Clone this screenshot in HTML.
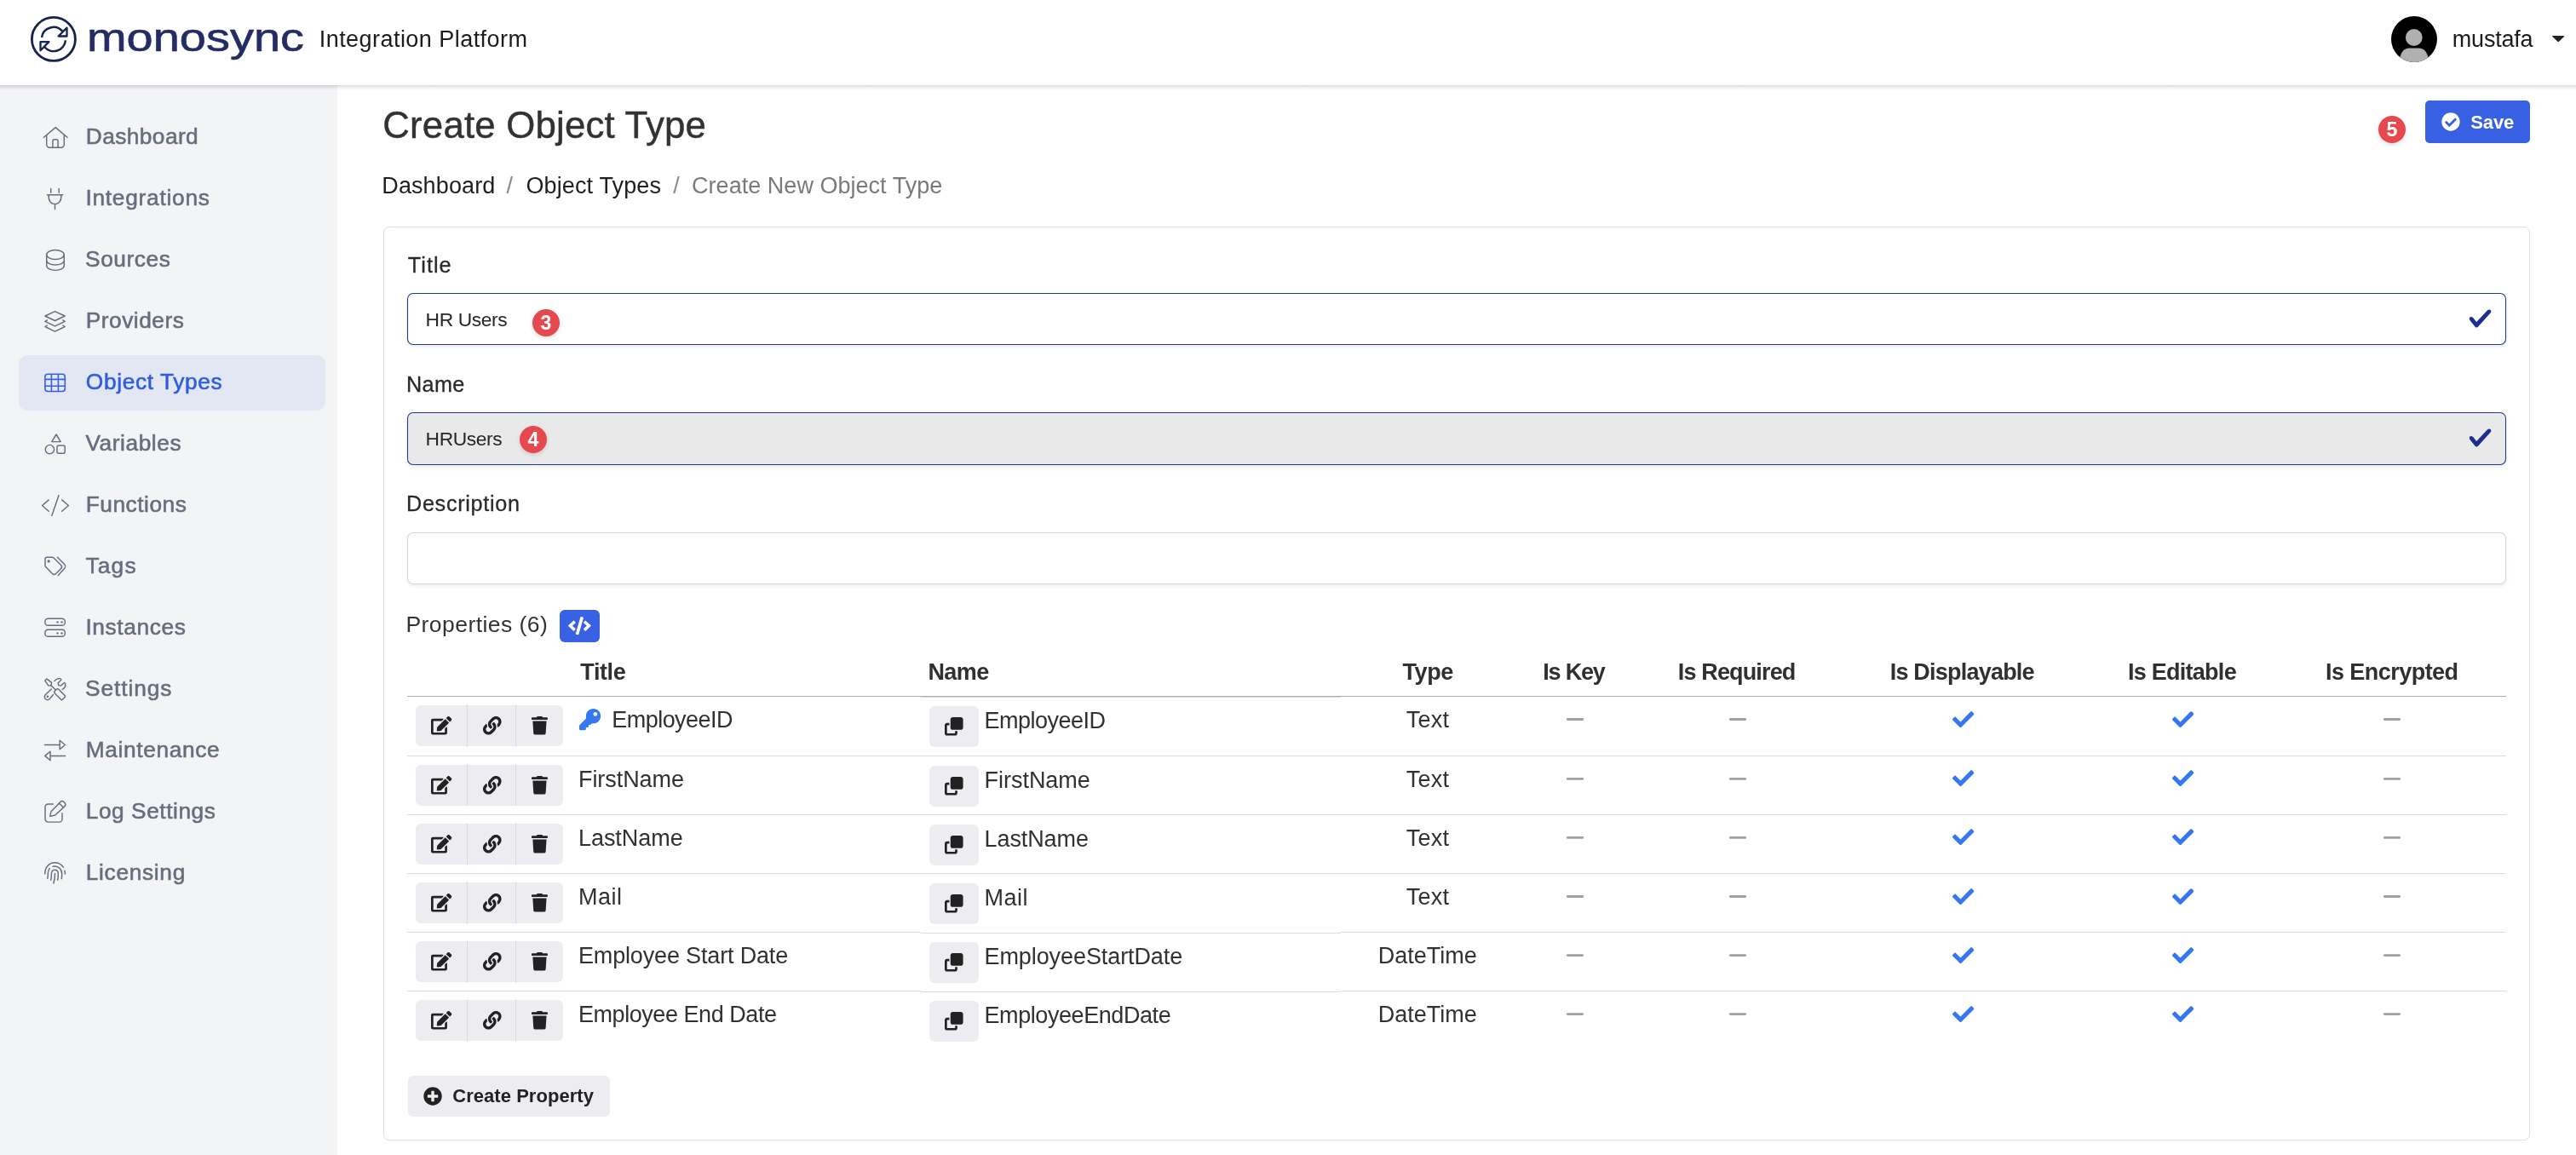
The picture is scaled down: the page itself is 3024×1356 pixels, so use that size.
<!DOCTYPE html>
<html lang="en"><head><meta charset="utf-8"><title>Create Object Type - monosync</title>
<style>
*{box-sizing:border-box;margin:0;padding:0}
html,body{width:3024px;height:1356px;overflow:hidden;background:#fff}
body{position:relative;font-family:"Liberation Sans",Arial,sans-serif;-webkit-font-smoothing:antialiased}
.t{position:absolute;white-space:nowrap;line-height:1;display:block}
.abs{position:absolute;display:block}
#hdr{left:0;top:0;width:3024px;height:100px;background:#fff}
#hshadow{left:0;top:100px;width:3024px;height:6px;background:linear-gradient(to bottom,rgba(20,25,40,.15),rgba(20,25,40,.05) 55%,rgba(20,25,40,0));z-index:5}
#side{left:0;top:100px;width:396px;height:1256px;background:#f3f4f6}
#active{left:22px;top:417px;width:360px;height:65px;border-radius:10px;background:#e3e7f4}
#card{left:450px;top:266px;width:2520px;height:1073px;border:1px solid #dedede;border-radius:7px;background:#fff}
.badge{will-change:transform;width:32px;height:32px;border-radius:50%;background:#e5484d;box-shadow:0 2px 5px rgba(0,0,0,.13);color:#fff;font-weight:700;font-size:23.2px;line-height:32px;text-align:center}
.btn{background:#ededf1;border-radius:6px}
svg{position:absolute;display:block;overflow:visible}
#tx{position:absolute;left:0;top:0;width:3024px;height:1356px;will-change:transform}
@media (max-width:2000px){html{zoom:.5}}

</style></head><body>
<div class="abs" id="hdr"></div>
<div class="abs" id="side"></div>
<div class="abs" id="hshadow"></div>
<div class="abs" id="active"></div>
<div class="abs" id="card"></div>
<svg style="left:0;top:0" width="400" height="100" viewBox="0 0 400 100">
<circle cx="62.9" cy="45.95" r="25.5" fill="none" stroke="#15244d" stroke-width="2.8"/>
<g fill="none" stroke="#15244d" stroke-width="2.5" stroke-linejoin="miter">
<path d="M49.0 44.0 A14 14 0 0 1 73.6 36.9"/>
<path d="M76.9 47.4 A14 14 0 0 1 52.2 55.0"/>
<path d="M78.5 32.6 L78.5 42.5 L68.6 42.5 Z" stroke-width="2.3" stroke-linejoin="round"/>
<path d="M47.5 49.1 L57.4 49.1 L47.5 59.2 Z" stroke-width="2.3" stroke-linejoin="round"/>
</g>
<text x="102.0" y="60.4" font-family="Liberation Sans, Arial, sans-serif" font-size="47" fill="#232c63" stroke="#232c63" stroke-width="0.6" textLength="255" lengthAdjust="spacingAndGlyphs">monosync</text>
</svg>
<svg style="left:2807px;top:19px" width="54" height="54" viewBox="0 0 54 54"><defs><clipPath id="av"><circle cx="27" cy="27" r="27"/></clipPath></defs>
<circle cx="27" cy="27" r="27" fill="#000"/><g clip-path="url(#av)" fill="#b0b0b0"><circle cx="26.8" cy="25" r="9.9"/><path d="M9.7 56 C9.7 45 13.5 37.5 21.5 37.5 L32.3 37.5 C40.3 37.5 44.1 45 44.1 56 L44.1 60 L9.7 60 Z"/></g></svg>
<svg style="left:2996px;top:42px" width="14.4" height="7.4" viewBox="0 0 14.4 7.4"><path d="M0.6 0 L13.8 0 Q14.6 0.2 14 0.9 L7.7 7.1 Q7.2 7.5 6.7 7.1 L0.4 0.9 Q-0.2 0.2 0.6 0 Z" fill="#222"/></svg>
<div class="abs" style="left:2847px;top:118px;width:123px;height:50px;border-radius:5px;background:#3860e2"></div>
<svg style="left:2866.00px;top:131.90px" width="22.00" height="22.00" viewBox="0 0 512 512" ><path fill="#fff" d="M504 256c0 136.967-111.033 248-248 248S8 392.967 8 256 119.033 8 256 8s248 111.033 248 248zM227.314 387.314l184-184c6.248-6.248 6.248-16.379 0-22.627l-22.627-22.627c-6.248-6.249-16.379-6.249-22.628 0L216 308.118l-70.059-70.059c-6.248-6.248-16.379-6.248-22.628 0l-22.627 22.627c-6.248 6.248-6.248 16.379 0 22.627l104 104c6.249 6.249 16.379 6.249 22.628.001z"/></svg>
<div class="abs badge" style="left:2792px;top:136.4px">5</div>
<svg style="left:0;top:0" width="3024" height="1356" viewBox="0 0 3024 1356">
<defs><filter id="ish" x="-1%" y="-20%" width="102%" height="150%"><feDropShadow dx="0" dy="2" stdDeviation="2" flood-color="#000" flood-opacity=".07"/></filter></defs>
<rect x="478.5" y="344.5" width="2463" height="60" rx="6.5" fill="#fff" stroke="#263a88" stroke-width="1.05" filter="url(#ish)"/>
<rect x="478.5" y="484.5" width="2463" height="61" rx="6.5" fill="#e9e9ea" stroke="#263a88" stroke-width="1.05" filter="url(#ish)"/>
<rect x="478.5" y="625.5" width="2463" height="60" rx="6.5" fill="#fff" stroke="#d1d4dc" stroke-width="1.05" filter="url(#ish)"/>
</svg>
<svg style="left:2897.30px;top:360.40px" width="29.20" height="28.00" viewBox="0 0 8 8" preserveAspectRatio="none"><path fill="#1c2f91" d="M2.300 6.730.600 4.530c-.400-1.040.460-1.400 1.100-.800l1.100 1.400 3.400-3.800c.600-.630 1.600-.270 1.200.700l-4 4.600c-.430.500-.800.400-1.100.100z"/></svg>
<svg style="left:2897.30px;top:500.40px" width="29.20" height="28.00" viewBox="0 0 8 8" preserveAspectRatio="none"><path fill="#1c2f91" d="M2.300 6.730.600 4.530c-.400-1.040.460-1.400 1.100-.800l1.100 1.400 3.400-3.800c.600-.630 1.600-.270 1.200.700l-4 4.600c-.430.500-.800.400-1.100.100z"/></svg>
<div class="abs badge" style="left:625.1px;top:362.8px">3</div>
<div class="abs badge" style="left:610.3px;top:499.8px">4</div>
<svg style="left:0;top:0" width="396" height="1356" viewBox="0 0 396 1356"><g fill="none" stroke="#676d7f" stroke-width="1.45" stroke-linecap="round" stroke-linejoin="round"><path d="M51.4 161.3 L65.2 149.6 L79 161.3"/><path d="M54.7 158.6 V169.6 a3.6 3.6 0 0 0 3.6 3.6 H71.7 a3.6 3.6 0 0 0 3.6 -3.6 V158.6"/><path d="M61.9 173.2 V165.5 a1.8 1.8 0 0 1 1.8 -1.8 h2.6 a1.8 1.8 0 0 1 1.8 1.8 V173.2"/><path d="M59.7 221.4 V226.2 M69.2 221.4 V226.2 M55.4 228.7 H73.6 M57.2 228.7 C56.6 236 60 239.6 64.5 239.6 C69 239.6 72.4 236 71.8 228.7 M64.5 239.6 V245.6"/><ellipse cx="65" cy="299" rx="10.3" ry="5.5"/><path d="M54.7 299 V311.8 C54.7 319.2 75.3 319.2 75.3 311.8 V299 M54.7 305.4 C54.7 312.8 75.3 312.8 75.3 305.4"/><path d="M64.5 365.6 L76.2 371 L64.5 376.5 L52.9 371 Z"/><path d="M55.4 375.8 L52.9 377.3 L64.5 382.9 L76.2 377.3 L73.8 375.8"/><path d="M55.4 382 L52.9 383.5 L64.5 389.1 L76.2 383.5 L73.8 382"/><path d="M66 510 L71.2 518.6 H60.8 Z"/><circle cx="58.4" cy="527.6" r="5.2"/><rect x="67" y="523" width="9.2" height="9.2" rx="2"/><path d="M57.3 586.9 L49.5 593.5 L57.3 600.2 M72.6 586.9 L80.4 593.5 L72.6 600.2 M69 581.6 L60.9 605.2"/><path d="M55.2 654.3 H61.2 a3 3 0 0 1 2.1 .9 L71.6 663.4 a3 3 0 0 1 0 4.2 L65.6 673.4 a3 3 0 0 1 -4.2 0 L53.9 665.8 a3 3 0 0 1 -.9 -2.1 V656.5 a2.2 2.2 0 0 1 2.2 -2.2 Z"/><path d="M67.4 654.2 L75.4 662.2 a4 4 0 0 1 0 5.6 L68.3 675.4"/><circle cx="57.1" cy="658.9" r=".9" fill="#676d7f"/><rect x="52.9" y="726.3" width="23.4" height="8" rx="3.4"/><rect x="52.9" y="739.3" width="23.4" height="8" rx="3.4"/><g fill="#676d7f" stroke="none"><circle cx="67.5" cy="730.4" r="1.2"/><circle cx="72.5" cy="730.4" r="1.2"/><circle cx="67.5" cy="743.4" r="1.2"/><circle cx="72.5" cy="743.4" r="1.2"/></g><path d="M54.8 796.9 L52.7 799.2 L56.8 804.9 L60 804.7 L60.6 801.4 Z"/><path d="M60 804.7 L65.6 810.2"/><path d="M66 809.6 a2.2 2.2 0 0 1 3.1 0 L76.2 816.7 a1.2 1.2 0 0 1 0 1.7 L73.3 821.3 a1.2 1.2 0 0 1 -1.7 0 L64.5 814.2 a2.2 2.2 0 0 1 0 -3.1 Z"/><path d="M63.8 799.6 C65.8 797.2 68.6 796.2 71 796.9 C72 797.3 72.1 798 71.4 798.7 L68.2 801.8 L68.8 804.6 L71.7 805.1 L74.8 802 C75.5 801.3 76.3 801.5 76.5 802.4 C77.2 805 76 807.8 73.2 809.4"/><path d="M60.3 809 L53.6 815.2 C51.8 817 52 819.2 53.3 820.5 C54.7 821.8 56.9 821.9 58.5 820.2 L62.5 815.6"/><circle cx="55.8" cy="817.8" r=".6" fill="#676d7f"/><path d="M52.4 874.5 H70 M70.2 869.2 L76.3 874.5 L70.2 879.8 Z M76.6 887.4 H59.2 M59 882.2 L52.8 887.4 L59 892.7 Z"/><path d="M62.4 944 H56.4 a3.4 3.4 0 0 0 -3.4 3.4 V961.7 a3.4 3.4 0 0 0 3.4 3.4 H69.6 a3.4 3.4 0 0 0 3.4 -3.4 V954.7"/><path d="M58.7 958.4 L60 952.8 L70.9 941.6 a2.9 2.9 0 0 1 4.1 0 L75.9 942.5 a2.9 2.9 0 0 1 0 4.1 L64.8 957 Z M69.7 943.2 L74.2 947.7"/><path d="M52.7 1026 C52.7 1018 57.6 1012.8 64.3 1012.8 C68.4 1012.8 72 1014.8 74.4 1018.2"/><path d="M75.9 1022.2 C76.3 1023.4 76.5 1024.6 76.4 1026"/><path d="M62.2 1017.3 C68 1016.2 72.7 1020 72.7 1026 C72.7 1028 72.6 1030 72.3 1031.5"/><path d="M58.2 1019.6 C56.8 1021.4 56.3 1023.4 56.3 1026 C56.3 1028 56.1 1030 55.8 1031.4"/><path d="M59.7 1033.2 C60.3 1030.8 60.4 1028.4 60.4 1026 C60.4 1023.2 62 1021.2 64.3 1021.2 C66.7 1021.2 68.3 1023.2 68.3 1026 C68.3 1028.6 68.1 1031 67.7 1033.2"/><path d="M64.5 1025.4 C64.6 1030 64 1033.6 62.9 1037"/></g><g fill="none" stroke="#3761e0" stroke-width="1.6" stroke-linejoin="round"><rect x="52.9" y="439.3" width="23.4" height="20.2" rx="3.2"/><path d="M60.4 439.3 V459.5 M68.4 439.3 V459.5 M52.9 445.4 H76.3 M52.9 453.2 H76.3"/></g></svg>
<div class="abs" style="left:657px;top:716px;width:47px;height:38px;border-radius:6px;background:#3861e3"></div>
<svg style="left:667.00px;top:723.90px" width="26.75" height="21.40" viewBox="0 0 640 512" ><path fill="#fff" d="M278.900 511.500l-61-17.700c-6.400-1.800-10-8.500-8.200-14.900L346.200 8.700c1.800-6.400 8.500-10 14.900-8.200l61 17.700c6.400 1.800 10 8.500 8.200 14.900L293.800 503.300c-1.900 6.400-8.500 10.100-14.900 8.200zm-114-112.200l43.500-46.400c4.600-4.900 4.300-12.700-.8-17.200L117 256l90.600-79.700c5.100-4.500 5.500-12.300.8-17.200l-43.500-46.400c-4.500-4.800-12.100-5.100-17-.5L3.800 247.200c-5.100 4.700-5.100 12.800 0 17.500l144.100 135.100c4.900 4.600 12.500 4.400 17-.5zm327.200.6l144.100-135.100c5.100-4.700 5.100-12.800 0-17.500L492.100 112.100c-4.800-4.500-12.400-4.300-17 .5L431.600 159c-4.600 4.900-4.300 12.700.8 17.200L523 256l-90.600 79.700c-5.100 4.500-5.500 12.300-.8 17.200l43.500 46.400c4.500 4.900 12.100 5.100 17 .6z"/></svg>
<svg style="left:0;top:0" width="3024" height="1356" viewBox="0 0 3024 1356"><rect x="478" y="817" width="2464" height="1" fill="#adadad"/><rect x="1081" y="818" width="493" height="1" fill="#dadada"/><rect x="478" y="887" width="2464" height="1" fill="#dcdcdc"/><rect x="478" y="956" width="2464" height="1" fill="#dcdcdc"/><rect x="478" y="1025" width="2464" height="1" fill="#dcdcdc"/><rect x="478" y="1094" width="603" height="1" fill="#dcdcdc"/><rect x="1081" y="1095" width="493" height="1" fill="#dcdcdc"/><rect x="1574" y="1094" width="1368" height="1" fill="#dcdcdc"/><rect x="478" y="1163" width="603" height="1" fill="#dcdcdc"/><rect x="1081" y="1164" width="493" height="1" fill="#dcdcdc"/><rect x="1574" y="1163" width="1368" height="1" fill="#dcdcdc"/><rect x="1838.9" y="843.10" width="20.2" height="2.8" rx="1.4" fill="#a0a0a0"/><rect x="2029.9" y="843.10" width="20.2" height="2.8" rx="1.4" fill="#a0a0a0"/><rect x="2797.9" y="843.10" width="20.2" height="2.8" rx="1.4" fill="#a0a0a0"/><rect x="1838.9" y="913.00" width="20.2" height="2.8" rx="1.4" fill="#a0a0a0"/><rect x="2029.9" y="913.00" width="20.2" height="2.8" rx="1.4" fill="#a0a0a0"/><rect x="2797.9" y="913.00" width="20.2" height="2.8" rx="1.4" fill="#a0a0a0"/><rect x="1838.9" y="982.05" width="20.2" height="2.8" rx="1.4" fill="#a0a0a0"/><rect x="2029.9" y="982.05" width="20.2" height="2.8" rx="1.4" fill="#a0a0a0"/><rect x="2797.9" y="982.05" width="20.2" height="2.8" rx="1.4" fill="#a0a0a0"/><rect x="1838.9" y="1051.10" width="20.2" height="2.8" rx="1.4" fill="#a0a0a0"/><rect x="2029.9" y="1051.10" width="20.2" height="2.8" rx="1.4" fill="#a0a0a0"/><rect x="2797.9" y="1051.10" width="20.2" height="2.8" rx="1.4" fill="#a0a0a0"/><rect x="1838.9" y="1120.15" width="20.2" height="2.8" rx="1.4" fill="#a0a0a0"/><rect x="2029.9" y="1120.15" width="20.2" height="2.8" rx="1.4" fill="#a0a0a0"/><rect x="2797.9" y="1120.15" width="20.2" height="2.8" rx="1.4" fill="#a0a0a0"/><rect x="1838.9" y="1189.20" width="20.2" height="2.8" rx="1.4" fill="#a0a0a0"/><rect x="2029.9" y="1189.20" width="20.2" height="2.8" rx="1.4" fill="#a0a0a0"/><rect x="2797.9" y="1189.20" width="20.2" height="2.8" rx="1.4" fill="#a0a0a0"/></svg>
<div class="abs btn" style="left:488px;top:827.60px;width:173px;height:48.6px"></div>
<div class="abs" style="left:547.8px;top:827.20px;width:1.4px;height:49.4px;background:#dcdcdf"></div>
<div class="abs" style="left:604.6px;top:827.20px;width:1.4px;height:49.4px;background:#dcdcdf"></div>
<svg style="left:505.90px;top:840.70px" width="24.30" height="21.60" viewBox="0 0 576 512" ><path fill="#222" d="M402.6 83.2l90.2 90.2c3.8 3.8 3.8 10 0 13.8L274.4 405.6l-92.8 10.3c-12.4 1.4-22.9-9.1-21.5-21.5l10.3-92.8L388.800 83.200c3.800-3.800 10-3.800 13.800 0zm162-22.900l-48.800-48.800c-15.200-15.200-39.900-15.200-55.200 0l-35.400 35.400c-3.800 3.800-3.800 10 0 13.800l90.200 90.200c3.800 3.800 10 3.800 13.800 0l35.400-35.400c15.200-15.300 15.200-40 0-55.200zM384 346.200V448H64V128h229.800c3.200 0 6.200-1.300 8.500-3.500l40-40c7.600-7.600 2.200-20.500-8.500-20.500H48C21.500 64 0 85.500 0 112v352c0 26.500 21.500 48 48 48h352c26.500 0 48-21.500 48-48V306.200c0-10.700-12.900-16-20.500-8.500l-40 40c-2.200 2.300-3.500 5.300-3.500 8.500z"/></svg>
<svg style="left:566.70px;top:840.70px" width="21.60" height="21.60" viewBox="0 0 512 512" ><path fill="#222" d="M326.612 185.391c59.747 59.809 58.927 155.698.36 214.59-.11.12-.24.25-.36.37l-67.2 67.2c-59.270 59.270-155.699 59.262-214.960 0-59.270-59.260-59.270-155.700 0-214.960l37.106-37.106c9.840-9.840 26.786-3.300 27.294 10.606.648 17.722 3.826 35.527 9.690 52.721 1.986 5.822.567 12.262-3.783 16.612l-13.087 13.087c-28.026 28.026-28.905 73.660-1.155 101.960 28.024 28.579 74.086 28.749 102.325.510l67.200-67.190c28.191-28.191 28.073-73.757 0-101.830-3.701-3.694-7.429-6.564-10.341-8.569a16.037 16.037 0 0 1-6.947-12.606c-.396-10.567 3.348-21.456 11.698-29.806l21.054-21.055c5.521-5.521 14.182-6.199 20.584-1.731a152.482 152.482 0 0 1 20.522 17.197zM467.547 44.449c-59.261-59.262-155.690-59.270-214.960 0l-67.200 67.200c-.120.120-.250.250-.360.370-58.566 58.892-59.387 154.781.360 214.590a152.454 152.454 0 0 0 20.521 17.196c6.402 4.468 15.064 3.789 20.584-1.731l21.054-21.055c8.350-8.350 12.094-19.239 11.698-29.806a16.037 16.037 0 0 0-6.947-12.606c-2.912-2.005-6.640-4.875-10.341-8.569-28.073-28.073-28.191-73.639 0-101.830l67.200-67.190c28.239-28.239 74.300-28.069 102.325.510 27.750 28.300 26.872 73.934-1.155 101.960l-13.087 13.087c-4.350 4.350-5.769 10.790-3.783 16.612 5.864 17.194 9.042 34.999 9.690 52.721.509 13.906 17.454 20.446 27.294 10.606l37.106-37.106c59.271-59.259 59.271-155.699.001-214.959z"/></svg>
<svg style="left:623.90px;top:840.70px" width="18.90" height="21.60" viewBox="0 0 448 512" ><path fill="#222" d="M432 32H312l-9.400-18.700A24 24 0 0 0 281.100 0H166.800a23.720 23.720 0 0 0-21.400 13.300L136 32H16A16 16 0 0 0 0 48v32a16 16 0 0 0 16 16h416a16 16 0 0 0 16-16V48a16 16 0 0 0-16-16zM53.200 467a48 48 0 0 0 47.900 45h245.800a48 48 0 0 0 47.900-45L416 128H32z"/></svg>
<div class="abs btn" style="left:1091px;top:828.80px;width:58.4px;height:48.4px"></div>
<svg style="left:1109.00px;top:841.70px" width="21.60" height="21.60" viewBox="0 0 512 512" ><path fill="#222" d="M288 448H64V224h64V160H64c-35.300 0-64 28.700-64 64V448c0 35.300 28.700 64 64 64H288c35.300 0 64-28.700 64-64V384H288v64zm-64-96H448c35.300 0 64-28.700 64-64V64c0-35.300-28.700-64-64-64H224c-35.300 0-64 28.700-64 64V288c0 35.300 28.700 64 64 64z"/></svg>
<svg style="left:2291.90px;top:831.50px" width="25.30" height="25.30" viewBox="0 0 512 512" ><path fill="#3577f1" d="M173.898 439.404l-166.400-166.400c-9.997-9.997-9.997-26.206 0-36.204l36.203-36.204c9.997-9.998 26.207-9.998 36.204 0L192 312.690 432.095 72.596c9.997-9.997 26.207-9.997 36.204 0l36.203 36.204c9.997 9.997 9.997 26.206 0 36.204l-294.400 294.401c-9.998 9.997-26.207 9.997-36.204-.001z"/></svg>
<svg style="left:2549.90px;top:831.50px" width="25.30" height="25.30" viewBox="0 0 512 512" ><path fill="#3577f1" d="M173.898 439.404l-166.400-166.400c-9.997-9.997-9.997-26.206 0-36.204l36.203-36.204c9.997-9.998 26.207-9.998 36.204 0L192 312.690 432.095 72.596c9.997-9.997 26.207-9.997 36.204 0l36.203 36.204c9.997 9.997 9.997 26.206 0 36.204l-294.400 294.401c-9.998 9.997-26.207 9.997-36.204-.001z"/></svg>
<div class="abs btn" style="left:488px;top:897.50px;width:173px;height:48.6px"></div>
<div class="abs" style="left:547.8px;top:897.10px;width:1.4px;height:49.4px;background:#dcdcdf"></div>
<div class="abs" style="left:604.6px;top:897.10px;width:1.4px;height:49.4px;background:#dcdcdf"></div>
<svg style="left:505.90px;top:910.60px" width="24.30" height="21.60" viewBox="0 0 576 512" ><path fill="#222" d="M402.6 83.2l90.2 90.2c3.8 3.8 3.8 10 0 13.8L274.4 405.6l-92.8 10.3c-12.4 1.4-22.9-9.1-21.5-21.5l10.3-92.8L388.800 83.200c3.800-3.800 10-3.800 13.800 0zm162-22.900l-48.800-48.800c-15.200-15.200-39.900-15.200-55.200 0l-35.400 35.400c-3.800 3.800-3.800 10 0 13.800l90.200 90.200c3.800 3.800 10 3.800 13.800 0l35.400-35.400c15.200-15.300 15.200-40 0-55.200zM384 346.200V448H64V128h229.800c3.200 0 6.200-1.300 8.500-3.500l40-40c7.600-7.600 2.200-20.500-8.500-20.500H48C21.500 64 0 85.500 0 112v352c0 26.500 21.500 48 48 48h352c26.500 0 48-21.500 48-48V306.200c0-10.700-12.900-16-20.500-8.500l-40 40c-2.200 2.300-3.500 5.300-3.500 8.500z"/></svg>
<svg style="left:566.70px;top:910.60px" width="21.60" height="21.60" viewBox="0 0 512 512" ><path fill="#222" d="M326.612 185.391c59.747 59.809 58.927 155.698.36 214.59-.11.12-.24.25-.36.37l-67.2 67.2c-59.270 59.270-155.699 59.262-214.960 0-59.270-59.260-59.270-155.700 0-214.960l37.106-37.106c9.840-9.840 26.786-3.300 27.294 10.606.648 17.722 3.826 35.527 9.690 52.721 1.986 5.822.567 12.262-3.783 16.612l-13.087 13.087c-28.026 28.026-28.905 73.660-1.155 101.960 28.024 28.579 74.086 28.749 102.325.510l67.200-67.190c28.191-28.191 28.073-73.757 0-101.830-3.701-3.694-7.429-6.564-10.341-8.569a16.037 16.037 0 0 1-6.947-12.606c-.396-10.567 3.348-21.456 11.698-29.806l21.054-21.055c5.521-5.521 14.182-6.199 20.584-1.731a152.482 152.482 0 0 1 20.522 17.197zM467.547 44.449c-59.261-59.262-155.690-59.270-214.960 0l-67.200 67.200c-.120.120-.250.250-.360.370-58.566 58.892-59.387 154.781.360 214.590a152.454 152.454 0 0 0 20.521 17.196c6.402 4.468 15.064 3.789 20.584-1.731l21.054-21.055c8.350-8.350 12.094-19.239 11.698-29.806a16.037 16.037 0 0 0-6.947-12.606c-2.912-2.005-6.640-4.875-10.341-8.569-28.073-28.073-28.191-73.639 0-101.830l67.200-67.190c28.239-28.239 74.300-28.069 102.325.510 27.750 28.300 26.872 73.934-1.155 101.960l-13.087 13.087c-4.350 4.350-5.769 10.790-3.783 16.612 5.864 17.194 9.042 34.999 9.690 52.721.509 13.906 17.454 20.446 27.294 10.606l37.106-37.106c59.271-59.259 59.271-155.699.001-214.959z"/></svg>
<svg style="left:623.90px;top:910.60px" width="18.90" height="21.60" viewBox="0 0 448 512" ><path fill="#222" d="M432 32H312l-9.400-18.700A24 24 0 0 0 281.100 0H166.800a23.720 23.720 0 0 0-21.400 13.300L136 32H16A16 16 0 0 0 0 48v32a16 16 0 0 0 16 16h416a16 16 0 0 0 16-16V48a16 16 0 0 0-16-16zM53.200 467a48 48 0 0 0 47.900 45h245.800a48 48 0 0 0 47.900-45L416 128H32z"/></svg>
<div class="abs btn" style="left:1091px;top:898.70px;width:58.4px;height:48.4px"></div>
<svg style="left:1109.00px;top:911.60px" width="21.60" height="21.60" viewBox="0 0 512 512" ><path fill="#222" d="M288 448H64V224h64V160H64c-35.300 0-64 28.700-64 64V448c0 35.300 28.700 64 64 64H288c35.300 0 64-28.700 64-64V384H288v64zm-64-96H448c35.300 0 64-28.700 64-64V64c0-35.300-28.700-64-64-64H224c-35.300 0-64 28.700-64 64V288c0 35.300 28.700 64 64 64z"/></svg>
<svg style="left:2291.90px;top:901.40px" width="25.30" height="25.30" viewBox="0 0 512 512" ><path fill="#3577f1" d="M173.898 439.404l-166.400-166.400c-9.997-9.997-9.997-26.206 0-36.204l36.203-36.204c9.997-9.998 26.207-9.998 36.204 0L192 312.690 432.095 72.596c9.997-9.997 26.207-9.997 36.204 0l36.203 36.204c9.997 9.997 9.997 26.206 0 36.204l-294.400 294.401c-9.998 9.997-26.207 9.997-36.204-.001z"/></svg>
<svg style="left:2549.90px;top:901.40px" width="25.30" height="25.30" viewBox="0 0 512 512" ><path fill="#3577f1" d="M173.898 439.404l-166.400-166.400c-9.997-9.997-9.997-26.206 0-36.204l36.203-36.204c9.997-9.998 26.207-9.998 36.204 0L192 312.690 432.095 72.596c9.997-9.997 26.207-9.997 36.204 0l36.203 36.204c9.997 9.997 9.997 26.206 0 36.204l-294.400 294.401c-9.998 9.997-26.207 9.997-36.204-.001z"/></svg>
<div class="abs btn" style="left:488px;top:966.55px;width:173px;height:48.6px"></div>
<div class="abs" style="left:547.8px;top:966.15px;width:1.4px;height:49.4px;background:#dcdcdf"></div>
<div class="abs" style="left:604.6px;top:966.15px;width:1.4px;height:49.4px;background:#dcdcdf"></div>
<svg style="left:505.90px;top:979.65px" width="24.30" height="21.60" viewBox="0 0 576 512" ><path fill="#222" d="M402.6 83.2l90.2 90.2c3.8 3.8 3.8 10 0 13.8L274.4 405.6l-92.8 10.3c-12.4 1.4-22.9-9.1-21.5-21.5l10.3-92.8L388.800 83.200c3.800-3.800 10-3.800 13.800 0zm162-22.900l-48.800-48.800c-15.200-15.200-39.900-15.200-55.200 0l-35.400 35.400c-3.800 3.800-3.800 10 0 13.800l90.200 90.200c3.800 3.800 10 3.800 13.800 0l35.400-35.400c15.200-15.300 15.200-40 0-55.200zM384 346.200V448H64V128h229.800c3.200 0 6.200-1.300 8.500-3.500l40-40c7.600-7.600 2.200-20.500-8.500-20.500H48C21.500 64 0 85.500 0 112v352c0 26.500 21.500 48 48 48h352c26.500 0 48-21.500 48-48V306.200c0-10.700-12.900-16-20.500-8.500l-40 40c-2.200 2.300-3.500 5.300-3.500 8.500z"/></svg>
<svg style="left:566.70px;top:979.65px" width="21.60" height="21.60" viewBox="0 0 512 512" ><path fill="#222" d="M326.612 185.391c59.747 59.809 58.927 155.698.36 214.59-.11.12-.24.25-.36.37l-67.2 67.2c-59.270 59.270-155.699 59.262-214.960 0-59.270-59.260-59.270-155.700 0-214.960l37.106-37.106c9.840-9.840 26.786-3.300 27.294 10.606.648 17.722 3.826 35.527 9.690 52.721 1.986 5.822.567 12.262-3.783 16.612l-13.087 13.087c-28.026 28.026-28.905 73.660-1.155 101.960 28.024 28.579 74.086 28.749 102.325.510l67.200-67.190c28.191-28.191 28.073-73.757 0-101.830-3.701-3.694-7.429-6.564-10.341-8.569a16.037 16.037 0 0 1-6.947-12.606c-.396-10.567 3.348-21.456 11.698-29.806l21.054-21.055c5.521-5.521 14.182-6.199 20.584-1.731a152.482 152.482 0 0 1 20.522 17.197zM467.547 44.449c-59.261-59.262-155.690-59.270-214.960 0l-67.200 67.200c-.120.120-.250.250-.360.370-58.566 58.892-59.387 154.781.360 214.590a152.454 152.454 0 0 0 20.521 17.196c6.402 4.468 15.064 3.789 20.584-1.731l21.054-21.055c8.350-8.350 12.094-19.239 11.698-29.806a16.037 16.037 0 0 0-6.947-12.606c-2.912-2.005-6.640-4.875-10.341-8.569-28.073-28.073-28.191-73.639 0-101.830l67.200-67.190c28.239-28.239 74.300-28.069 102.325.510 27.750 28.300 26.872 73.934-1.155 101.960l-13.087 13.087c-4.350 4.350-5.769 10.790-3.783 16.612 5.864 17.194 9.042 34.999 9.690 52.721.509 13.906 17.454 20.446 27.294 10.606l37.106-37.106c59.271-59.259 59.271-155.699.001-214.959z"/></svg>
<svg style="left:623.90px;top:979.65px" width="18.90" height="21.60" viewBox="0 0 448 512" ><path fill="#222" d="M432 32H312l-9.400-18.700A24 24 0 0 0 281.100 0H166.800a23.720 23.720 0 0 0-21.400 13.300L136 32H16A16 16 0 0 0 0 48v32a16 16 0 0 0 16 16h416a16 16 0 0 0 16-16V48a16 16 0 0 0-16-16zM53.200 467a48 48 0 0 0 47.900 45h245.800a48 48 0 0 0 47.900-45L416 128H32z"/></svg>
<div class="abs btn" style="left:1091px;top:967.75px;width:58.4px;height:48.4px"></div>
<svg style="left:1109.00px;top:980.65px" width="21.60" height="21.60" viewBox="0 0 512 512" ><path fill="#222" d="M288 448H64V224h64V160H64c-35.300 0-64 28.700-64 64V448c0 35.300 28.700 64 64 64H288c35.300 0 64-28.700 64-64V384H288v64zm-64-96H448c35.300 0 64-28.700 64-64V64c0-35.300-28.700-64-64-64H224c-35.300 0-64 28.700-64 64V288c0 35.300 28.700 64 64 64z"/></svg>
<svg style="left:2291.90px;top:970.45px" width="25.30" height="25.30" viewBox="0 0 512 512" ><path fill="#3577f1" d="M173.898 439.404l-166.400-166.400c-9.997-9.997-9.997-26.206 0-36.204l36.203-36.204c9.997-9.998 26.207-9.998 36.204 0L192 312.690 432.095 72.596c9.997-9.997 26.207-9.997 36.204 0l36.203 36.204c9.997 9.997 9.997 26.206 0 36.204l-294.400 294.401c-9.998 9.997-26.207 9.997-36.204-.001z"/></svg>
<svg style="left:2549.90px;top:970.45px" width="25.30" height="25.30" viewBox="0 0 512 512" ><path fill="#3577f1" d="M173.898 439.404l-166.400-166.400c-9.997-9.997-9.997-26.206 0-36.204l36.203-36.204c9.997-9.998 26.207-9.998 36.204 0L192 312.690 432.095 72.596c9.997-9.997 26.207-9.997 36.204 0l36.203 36.204c9.997 9.997 9.997 26.206 0 36.204l-294.400 294.401c-9.998 9.997-26.207 9.997-36.204-.001z"/></svg>
<div class="abs btn" style="left:488px;top:1035.60px;width:173px;height:48.6px"></div>
<div class="abs" style="left:547.8px;top:1035.20px;width:1.4px;height:49.4px;background:#dcdcdf"></div>
<div class="abs" style="left:604.6px;top:1035.20px;width:1.4px;height:49.4px;background:#dcdcdf"></div>
<svg style="left:505.90px;top:1048.70px" width="24.30" height="21.60" viewBox="0 0 576 512" ><path fill="#222" d="M402.6 83.2l90.2 90.2c3.8 3.8 3.8 10 0 13.8L274.4 405.6l-92.8 10.3c-12.4 1.4-22.9-9.1-21.5-21.5l10.3-92.8L388.800 83.200c3.800-3.800 10-3.800 13.800 0zm162-22.900l-48.800-48.800c-15.200-15.200-39.900-15.200-55.200 0l-35.400 35.400c-3.800 3.800-3.800 10 0 13.800l90.200 90.200c3.800 3.800 10 3.800 13.800 0l35.400-35.400c15.200-15.300 15.200-40 0-55.200zM384 346.200V448H64V128h229.800c3.200 0 6.200-1.300 8.500-3.500l40-40c7.600-7.600 2.200-20.500-8.500-20.500H48C21.500 64 0 85.500 0 112v352c0 26.500 21.500 48 48 48h352c26.500 0 48-21.500 48-48V306.200c0-10.700-12.900-16-20.500-8.500l-40 40c-2.200 2.300-3.500 5.300-3.500 8.500z"/></svg>
<svg style="left:566.70px;top:1048.70px" width="21.60" height="21.60" viewBox="0 0 512 512" ><path fill="#222" d="M326.612 185.391c59.747 59.809 58.927 155.698.36 214.59-.11.12-.24.25-.36.37l-67.2 67.2c-59.270 59.270-155.699 59.262-214.960 0-59.270-59.260-59.270-155.700 0-214.960l37.106-37.106c9.840-9.840 26.786-3.300 27.294 10.606.648 17.722 3.826 35.527 9.690 52.721 1.986 5.822.567 12.262-3.783 16.612l-13.087 13.087c-28.026 28.026-28.905 73.660-1.155 101.960 28.024 28.579 74.086 28.749 102.325.510l67.200-67.190c28.191-28.191 28.073-73.757 0-101.830-3.701-3.694-7.429-6.564-10.341-8.569a16.037 16.037 0 0 1-6.947-12.606c-.396-10.567 3.348-21.456 11.698-29.806l21.054-21.055c5.521-5.521 14.182-6.199 20.584-1.731a152.482 152.482 0 0 1 20.522 17.197zM467.547 44.449c-59.261-59.262-155.690-59.270-214.960 0l-67.200 67.200c-.120.120-.250.250-.360.370-58.566 58.892-59.387 154.781.360 214.590a152.454 152.454 0 0 0 20.521 17.196c6.402 4.468 15.064 3.789 20.584-1.731l21.054-21.055c8.350-8.350 12.094-19.239 11.698-29.806a16.037 16.037 0 0 0-6.947-12.606c-2.912-2.005-6.640-4.875-10.341-8.569-28.073-28.073-28.191-73.639 0-101.830l67.200-67.190c28.239-28.239 74.300-28.069 102.325.510 27.750 28.300 26.872 73.934-1.155 101.960l-13.087 13.087c-4.350 4.350-5.769 10.790-3.783 16.612 5.864 17.194 9.042 34.999 9.690 52.721.509 13.906 17.454 20.446 27.294 10.606l37.106-37.106c59.271-59.259 59.271-155.699.001-214.959z"/></svg>
<svg style="left:623.90px;top:1048.70px" width="18.90" height="21.60" viewBox="0 0 448 512" ><path fill="#222" d="M432 32H312l-9.400-18.700A24 24 0 0 0 281.100 0H166.800a23.720 23.720 0 0 0-21.400 13.300L136 32H16A16 16 0 0 0 0 48v32a16 16 0 0 0 16 16h416a16 16 0 0 0 16-16V48a16 16 0 0 0-16-16zM53.200 467a48 48 0 0 0 47.900 45h245.800a48 48 0 0 0 47.900-45L416 128H32z"/></svg>
<div class="abs btn" style="left:1091px;top:1036.80px;width:58.4px;height:48.4px"></div>
<svg style="left:1109.00px;top:1049.70px" width="21.60" height="21.60" viewBox="0 0 512 512" ><path fill="#222" d="M288 448H64V224h64V160H64c-35.300 0-64 28.700-64 64V448c0 35.300 28.700 64 64 64H288c35.300 0 64-28.700 64-64V384H288v64zm-64-96H448c35.300 0 64-28.700 64-64V64c0-35.300-28.700-64-64-64H224c-35.300 0-64 28.700-64 64V288c0 35.300 28.700 64 64 64z"/></svg>
<svg style="left:2291.90px;top:1039.50px" width="25.30" height="25.30" viewBox="0 0 512 512" ><path fill="#3577f1" d="M173.898 439.404l-166.400-166.400c-9.997-9.997-9.997-26.206 0-36.204l36.203-36.204c9.997-9.998 26.207-9.998 36.204 0L192 312.690 432.095 72.596c9.997-9.997 26.207-9.997 36.204 0l36.203 36.204c9.997 9.997 9.997 26.206 0 36.204l-294.400 294.401c-9.998 9.997-26.207 9.997-36.204-.001z"/></svg>
<svg style="left:2549.90px;top:1039.50px" width="25.30" height="25.30" viewBox="0 0 512 512" ><path fill="#3577f1" d="M173.898 439.404l-166.400-166.400c-9.997-9.997-9.997-26.206 0-36.204l36.203-36.204c9.997-9.998 26.207-9.998 36.204 0L192 312.690 432.095 72.596c9.997-9.997 26.207-9.997 36.204 0l36.203 36.204c9.997 9.997 9.997 26.206 0 36.204l-294.400 294.401c-9.998 9.997-26.207 9.997-36.204-.001z"/></svg>
<div class="abs btn" style="left:488px;top:1104.65px;width:173px;height:48.6px"></div>
<div class="abs" style="left:547.8px;top:1104.25px;width:1.4px;height:49.4px;background:#dcdcdf"></div>
<div class="abs" style="left:604.6px;top:1104.25px;width:1.4px;height:49.4px;background:#dcdcdf"></div>
<svg style="left:505.90px;top:1117.75px" width="24.30" height="21.60" viewBox="0 0 576 512" ><path fill="#222" d="M402.6 83.2l90.2 90.2c3.8 3.8 3.8 10 0 13.8L274.4 405.6l-92.8 10.3c-12.4 1.4-22.9-9.1-21.5-21.5l10.3-92.8L388.800 83.200c3.800-3.800 10-3.800 13.800 0zm162-22.900l-48.800-48.800c-15.200-15.200-39.900-15.200-55.200 0l-35.400 35.400c-3.800 3.800-3.800 10 0 13.800l90.200 90.200c3.800 3.800 10 3.800 13.800 0l35.400-35.400c15.200-15.300 15.200-40 0-55.200zM384 346.200V448H64V128h229.800c3.200 0 6.200-1.300 8.500-3.500l40-40c7.600-7.600 2.200-20.500-8.500-20.500H48C21.500 64 0 85.500 0 112v352c0 26.500 21.500 48 48 48h352c26.500 0 48-21.500 48-48V306.200c0-10.700-12.900-16-20.500-8.500l-40 40c-2.200 2.300-3.500 5.300-3.500 8.500z"/></svg>
<svg style="left:566.70px;top:1117.75px" width="21.60" height="21.60" viewBox="0 0 512 512" ><path fill="#222" d="M326.612 185.391c59.747 59.809 58.927 155.698.36 214.59-.11.12-.24.25-.36.37l-67.2 67.2c-59.270 59.270-155.699 59.262-214.960 0-59.270-59.260-59.270-155.700 0-214.960l37.106-37.106c9.840-9.840 26.786-3.300 27.294 10.606.648 17.722 3.826 35.527 9.690 52.721 1.986 5.822.567 12.262-3.783 16.612l-13.087 13.087c-28.026 28.026-28.905 73.660-1.155 101.960 28.024 28.579 74.086 28.749 102.325.510l67.200-67.190c28.191-28.191 28.073-73.757 0-101.830-3.701-3.694-7.429-6.564-10.341-8.569a16.037 16.037 0 0 1-6.947-12.606c-.396-10.567 3.348-21.456 11.698-29.806l21.054-21.055c5.521-5.521 14.182-6.199 20.584-1.731a152.482 152.482 0 0 1 20.522 17.197zM467.547 44.449c-59.261-59.262-155.690-59.270-214.960 0l-67.200 67.200c-.120.120-.250.250-.360.370-58.566 58.892-59.387 154.781.360 214.590a152.454 152.454 0 0 0 20.521 17.196c6.402 4.468 15.064 3.789 20.584-1.731l21.054-21.055c8.350-8.350 12.094-19.239 11.698-29.806a16.037 16.037 0 0 0-6.947-12.606c-2.912-2.005-6.640-4.875-10.341-8.569-28.073-28.073-28.191-73.639 0-101.830l67.200-67.190c28.239-28.239 74.300-28.069 102.325.510 27.750 28.300 26.872 73.934-1.155 101.960l-13.087 13.087c-4.350 4.350-5.769 10.790-3.783 16.612 5.864 17.194 9.042 34.999 9.690 52.721.509 13.906 17.454 20.446 27.294 10.606l37.106-37.106c59.271-59.259 59.271-155.699.001-214.959z"/></svg>
<svg style="left:623.90px;top:1117.75px" width="18.90" height="21.60" viewBox="0 0 448 512" ><path fill="#222" d="M432 32H312l-9.400-18.700A24 24 0 0 0 281.100 0H166.800a23.720 23.720 0 0 0-21.400 13.300L136 32H16A16 16 0 0 0 0 48v32a16 16 0 0 0 16 16h416a16 16 0 0 0 16-16V48a16 16 0 0 0-16-16zM53.200 467a48 48 0 0 0 47.900 45h245.800a48 48 0 0 0 47.900-45L416 128H32z"/></svg>
<div class="abs btn" style="left:1091px;top:1105.85px;width:58.4px;height:48.4px"></div>
<svg style="left:1109.00px;top:1118.75px" width="21.60" height="21.60" viewBox="0 0 512 512" ><path fill="#222" d="M288 448H64V224h64V160H64c-35.300 0-64 28.700-64 64V448c0 35.300 28.700 64 64 64H288c35.300 0 64-28.700 64-64V384H288v64zm-64-96H448c35.300 0 64-28.700 64-64V64c0-35.300-28.700-64-64-64H224c-35.300 0-64 28.700-64 64V288c0 35.300 28.700 64 64 64z"/></svg>
<svg style="left:2291.90px;top:1108.55px" width="25.30" height="25.30" viewBox="0 0 512 512" ><path fill="#3577f1" d="M173.898 439.404l-166.400-166.400c-9.997-9.997-9.997-26.206 0-36.204l36.203-36.204c9.997-9.998 26.207-9.998 36.204 0L192 312.690 432.095 72.596c9.997-9.997 26.207-9.997 36.204 0l36.203 36.204c9.997 9.997 9.997 26.206 0 36.204l-294.400 294.401c-9.998 9.997-26.207 9.997-36.204-.001z"/></svg>
<svg style="left:2549.90px;top:1108.55px" width="25.30" height="25.30" viewBox="0 0 512 512" ><path fill="#3577f1" d="M173.898 439.404l-166.400-166.400c-9.997-9.997-9.997-26.206 0-36.204l36.203-36.204c9.997-9.998 26.207-9.998 36.204 0L192 312.690 432.095 72.596c9.997-9.997 26.207-9.997 36.204 0l36.203 36.204c9.997 9.997 9.997 26.206 0 36.204l-294.400 294.401c-9.998 9.997-26.207 9.997-36.204-.001z"/></svg>
<div class="abs btn" style="left:488px;top:1173.70px;width:173px;height:48.6px"></div>
<div class="abs" style="left:547.8px;top:1173.30px;width:1.4px;height:49.4px;background:#dcdcdf"></div>
<div class="abs" style="left:604.6px;top:1173.30px;width:1.4px;height:49.4px;background:#dcdcdf"></div>
<svg style="left:505.90px;top:1186.80px" width="24.30" height="21.60" viewBox="0 0 576 512" ><path fill="#222" d="M402.6 83.2l90.2 90.2c3.8 3.8 3.8 10 0 13.8L274.4 405.6l-92.8 10.3c-12.4 1.4-22.9-9.1-21.5-21.5l10.3-92.8L388.800 83.200c3.800-3.800 10-3.800 13.800 0zm162-22.900l-48.800-48.800c-15.200-15.200-39.900-15.200-55.200 0l-35.400 35.400c-3.800 3.800-3.800 10 0 13.800l90.200 90.200c3.800 3.800 10 3.800 13.800 0l35.400-35.400c15.200-15.300 15.200-40 0-55.200zM384 346.200V448H64V128h229.800c3.200 0 6.200-1.300 8.500-3.500l40-40c7.600-7.600 2.200-20.500-8.500-20.500H48C21.500 64 0 85.500 0 112v352c0 26.500 21.500 48 48 48h352c26.500 0 48-21.500 48-48V306.200c0-10.700-12.900-16-20.500-8.500l-40 40c-2.200 2.300-3.500 5.300-3.500 8.500z"/></svg>
<svg style="left:566.70px;top:1186.80px" width="21.60" height="21.60" viewBox="0 0 512 512" ><path fill="#222" d="M326.612 185.391c59.747 59.809 58.927 155.698.36 214.59-.11.12-.24.25-.36.37l-67.2 67.2c-59.270 59.270-155.699 59.262-214.960 0-59.270-59.260-59.270-155.700 0-214.960l37.106-37.106c9.840-9.840 26.786-3.300 27.294 10.606.648 17.722 3.826 35.527 9.690 52.721 1.986 5.822.567 12.262-3.783 16.612l-13.087 13.087c-28.026 28.026-28.905 73.660-1.155 101.960 28.024 28.579 74.086 28.749 102.325.510l67.200-67.190c28.191-28.191 28.073-73.757 0-101.830-3.701-3.694-7.429-6.564-10.341-8.569a16.037 16.037 0 0 1-6.947-12.606c-.396-10.567 3.348-21.456 11.698-29.806l21.054-21.055c5.521-5.521 14.182-6.199 20.584-1.731a152.482 152.482 0 0 1 20.522 17.197zM467.547 44.449c-59.261-59.262-155.690-59.270-214.960 0l-67.200 67.200c-.120.120-.250.250-.360.370-58.566 58.892-59.387 154.781.360 214.590a152.454 152.454 0 0 0 20.521 17.196c6.402 4.468 15.064 3.789 20.584-1.731l21.054-21.055c8.350-8.350 12.094-19.239 11.698-29.806a16.037 16.037 0 0 0-6.947-12.606c-2.912-2.005-6.640-4.875-10.341-8.569-28.073-28.073-28.191-73.639 0-101.830l67.200-67.190c28.239-28.239 74.300-28.069 102.325.510 27.750 28.300 26.872 73.934-1.155 101.960l-13.087 13.087c-4.350 4.350-5.769 10.790-3.783 16.612 5.864 17.194 9.042 34.999 9.690 52.721.509 13.906 17.454 20.446 27.294 10.606l37.106-37.106c59.271-59.259 59.271-155.699.001-214.959z"/></svg>
<svg style="left:623.90px;top:1186.80px" width="18.90" height="21.60" viewBox="0 0 448 512" ><path fill="#222" d="M432 32H312l-9.400-18.700A24 24 0 0 0 281.100 0H166.800a23.720 23.720 0 0 0-21.400 13.300L136 32H16A16 16 0 0 0 0 48v32a16 16 0 0 0 16 16h416a16 16 0 0 0 16-16V48a16 16 0 0 0-16-16zM53.200 467a48 48 0 0 0 47.900 45h245.800a48 48 0 0 0 47.900-45L416 128H32z"/></svg>
<div class="abs btn" style="left:1091px;top:1174.90px;width:58.4px;height:48.4px"></div>
<svg style="left:1109.00px;top:1187.80px" width="21.60" height="21.60" viewBox="0 0 512 512" ><path fill="#222" d="M288 448H64V224h64V160H64c-35.300 0-64 28.700-64 64V448c0 35.300 28.700 64 64 64H288c35.300 0 64-28.700 64-64V384H288v64zm-64-96H448c35.300 0 64-28.700 64-64V64c0-35.300-28.700-64-64-64H224c-35.300 0-64 28.700-64 64V288c0 35.300 28.700 64 64 64z"/></svg>
<svg style="left:2291.90px;top:1177.60px" width="25.30" height="25.30" viewBox="0 0 512 512" ><path fill="#3577f1" d="M173.898 439.404l-166.400-166.400c-9.997-9.997-9.997-26.206 0-36.204l36.203-36.204c9.997-9.998 26.207-9.998 36.204 0L192 312.690 432.095 72.596c9.997-9.997 26.207-9.997 36.204 0l36.203 36.204c9.997 9.997 9.997 26.206 0 36.204l-294.400 294.401c-9.998 9.997-26.207 9.997-36.204-.001z"/></svg>
<svg style="left:2549.90px;top:1177.60px" width="25.30" height="25.30" viewBox="0 0 512 512" ><path fill="#3577f1" d="M173.898 439.404l-166.400-166.400c-9.997-9.997-9.997-26.206 0-36.204l36.203-36.204c9.997-9.998 26.207-9.998 36.204 0L192 312.690 432.095 72.596c9.997-9.997 26.207-9.997 36.204 0l36.203 36.204c9.997 9.997 9.997 26.206 0 36.204l-294.400 294.401c-9.998 9.997-26.207 9.997-36.204-.001z"/></svg>
<svg style="left:679.90px;top:832.00px" width="25.20" height="25.20" viewBox="0 0 512 512" ><path fill="#3577f1" d="M512 176.001C512 273.203 433.202 352 336 352c-11.220 0-22.190-1.062-32.827-3.069l-24.012 27.014A23.999 23.999 0 0 1 261.223 384H224v40c0 13.255-10.745 24-24 24h-40v40c0 13.255-10.745 24-24 24H24c-13.255 0-24-10.745-24-24v-78.059c0-6.365 2.529-12.470 7.029-16.971l161.802-161.802C163.108 213.814 160 195.271 160 176 160 78.798 238.797.001 335.999 0 433.488-.001 512 78.511 512 176.001zM336 128c0 26.510 21.490 48 48 48s48-21.490 48-48-21.490-48-48-48-48 21.490-48 48z"/></svg>
<div class="abs btn" style="left:479px;top:1263px;width:237px;height:48px"></div>
<svg style="left:496.90px;top:1275.60px" width="22.10" height="22.10" viewBox="0 0 512 512" ><path fill="#222" d="M256 8C119 8 8 119 8 256s111 248 248 248 248-111 248-248S393 8 256 8zm144 276c0 6.600-5.400 12-12 12h-92v92c0 6.600-5.400 12-12 12h-56c-6.600 0-12-5.400-12-12v-92h-92c-6.600 0-12-5.400-12-12v-56c0-6.600 5.400-12 12-12h92v-92c0-6.600 5.400-12 12-12h56c6.600 0 12 5.400 12 12v92h92c6.600 0 12 5.400 12 12v56z"/></svg>
<div id="tx">
<span class="t" style="left:374.73px;top:33.00px;font-size:27px;letter-spacing:0.455px;color:#1c1c1c;">Integration Platform</span>
<span class="t" style="left:2878.83px;top:33.00px;font-size:27px;letter-spacing:-0.217px;color:#1c1c1c;">mustafa</span>
<span class="t" style="left:100.73px;top:147.00px;font-size:26.3px;letter-spacing:0.422px;color:#656d7f;-webkit-text-stroke:0.55px #656d7f;">Dashboard</span>
<span class="t" style="left:100.41px;top:219.00px;font-size:26.3px;letter-spacing:0.736px;color:#656d7f;-webkit-text-stroke:0.55px #656d7f;">Integrations</span>
<span class="t" style="left:100.12px;top:291.00px;font-size:26.3px;letter-spacing:0.537px;color:#656d7f;-webkit-text-stroke:0.55px #656d7f;">Sources</span>
<span class="t" style="left:100.73px;top:363.00px;font-size:26.3px;letter-spacing:0.501px;color:#656d7f;-webkit-text-stroke:0.55px #656d7f;">Providers</span>
<span class="t" style="left:100.83px;top:435.00px;font-size:26.3px;letter-spacing:0.632px;color:#2f5ce0;-webkit-text-stroke:0.55px #2f5ce0;">Object Types</span>
<span class="t" style="left:100.49px;top:507.00px;font-size:26.3px;letter-spacing:0.552px;color:#656d7f;-webkit-text-stroke:0.55px #656d7f;">Variables</span>
<span class="t" style="left:100.73px;top:579.00px;font-size:26.3px;letter-spacing:0.524px;color:#656d7f;-webkit-text-stroke:0.55px #656d7f;">Functions</span>
<span class="t" style="left:100.39px;top:651.00px;font-size:26.3px;letter-spacing:1.216px;color:#656d7f;-webkit-text-stroke:0.55px #656d7f;">Tags</span>
<span class="t" style="left:100.41px;top:723.00px;font-size:26.3px;letter-spacing:0.620px;color:#656d7f;-webkit-text-stroke:0.55px #656d7f;">Instances</span>
<span class="t" style="left:100.12px;top:795.00px;font-size:26.3px;letter-spacing:0.894px;color:#656d7f;-webkit-text-stroke:0.55px #656d7f;">Settings</span>
<span class="t" style="left:100.73px;top:867.00px;font-size:26.3px;letter-spacing:0.636px;color:#656d7f;-webkit-text-stroke:0.55px #656d7f;">Maintenance</span>
<span class="t" style="left:100.73px;top:939.00px;font-size:26.3px;letter-spacing:0.545px;color:#656d7f;-webkit-text-stroke:0.55px #656d7f;">Log Settings</span>
<span class="t" style="left:100.73px;top:1011.00px;font-size:26.3px;letter-spacing:0.682px;color:#656d7f;-webkit-text-stroke:0.55px #656d7f;">Licensing</span>
<span class="t" style="left:449.29px;top:125.00px;font-size:43.8px;letter-spacing:0.184px;color:#323232;-webkit-text-stroke:0.45px #323232;">Create Object Type</span>
<span class="t" style="left:448.27px;top:205.00px;font-size:27px;letter-spacing:0.114px;color:#1f1f1f;">Dashboard</span>
<span class="t" style="left:594.43px;top:205.00px;font-size:27px;letter-spacing:0.000px;color:#8a8a8a;">/</span>
<span class="t" style="left:617.42px;top:205.00px;font-size:27px;letter-spacing:0.136px;color:#1f1f1f;">Object Types</span>
<span class="t" style="left:790.30px;top:205.00px;font-size:27px;letter-spacing:0.000px;color:#8a8a8a;">/</span>
<span class="t" style="left:812.08px;top:205.00px;font-size:27px;letter-spacing:0.028px;color:#7a7a7a;">Create New Object Type</span>
<span class="t" style="left:478.80px;top:299.00px;font-size:25.2px;letter-spacing:1.038px;color:#2a2a2a;-webkit-text-stroke:0.3px #2a2a2a;">Title</span>
<span class="t" style="left:477.01px;top:439.00px;font-size:25.2px;letter-spacing:0.355px;color:#2a2a2a;-webkit-text-stroke:0.3px #2a2a2a;">Name</span>
<span class="t" style="left:477.01px;top:579.00px;font-size:25.2px;letter-spacing:0.699px;color:#2a2a2a;-webkit-text-stroke:0.3px #2a2a2a;">Description</span>
<span class="t" style="left:499.58px;top:364.00px;font-size:22.8px;letter-spacing:-0.396px;color:#272727;">HR Users</span>
<span class="t" style="left:499.58px;top:504.00px;font-size:22.8px;letter-spacing:-0.395px;color:#272727;">HRUsers</span>
<span class="t" style="left:476.42px;top:720.00px;font-size:26.5px;letter-spacing:0.458px;color:#333;">Properties (6)</span>
<span class="t" style="left:681.37px;top:776.00px;font-size:27px;letter-spacing:-0.431px;color:#303030;font-weight:700;">Title</span>
<span class="t" style="left:1089.41px;top:776.00px;font-size:27px;letter-spacing:-0.534px;color:#303030;font-weight:700;">Name</span>
<span class="t" style="left:1646.53px;top:776.00px;font-size:27px;letter-spacing:-0.390px;color:#303030;font-weight:700;">Type</span>
<span class="t" style="left:1811.32px;top:776.00px;font-size:27px;letter-spacing:-1.231px;color:#303030;font-weight:700;">Is Key</span>
<span class="t" style="left:1969.76px;top:776.00px;font-size:27px;letter-spacing:-0.844px;color:#303030;font-weight:700;">Is Required</span>
<span class="t" style="left:2218.71px;top:776.00px;font-size:27px;letter-spacing:-0.785px;color:#303030;font-weight:700;">Is Displayable</span>
<span class="t" style="left:2497.89px;top:776.00px;font-size:27px;letter-spacing:-0.726px;color:#303030;font-weight:700;">Is Editable</span>
<span class="t" style="left:2729.98px;top:776.00px;font-size:27px;letter-spacing:-0.543px;color:#303030;font-weight:700;">Is Encrypted</span>
<span class="t" style="left:718.22px;top:832.00px;font-size:27px;letter-spacing:-0.527px;color:#313131;">EmployeeID</span>
<span class="t" style="left:1155.54px;top:833.00px;font-size:27px;letter-spacing:-0.524px;color:#313131;">EmployeeID</span>
<span class="t" style="left:1650.67px;top:832.00px;font-size:27px;letter-spacing:0.293px;color:#313131;">Text</span>
<span class="t" style="left:678.99px;top:902.00px;font-size:27px;letter-spacing:-0.067px;color:#313131;">FirstName</span>
<span class="t" style="left:1155.54px;top:903.00px;font-size:27px;letter-spacing:-0.024px;color:#313131;">FirstName</span>
<span class="t" style="left:1650.67px;top:902.00px;font-size:27px;letter-spacing:0.293px;color:#313131;">Text</span>
<span class="t" style="left:678.99px;top:971.00px;font-size:27px;letter-spacing:-0.053px;color:#313131;">LastName</span>
<span class="t" style="left:1155.54px;top:972.00px;font-size:27px;letter-spacing:-0.093px;color:#313131;">LastName</span>
<span class="t" style="left:1650.67px;top:971.00px;font-size:27px;letter-spacing:0.293px;color:#313131;">Text</span>
<span class="t" style="left:678.99px;top:1040.00px;font-size:27px;letter-spacing:0.535px;color:#313131;">Mail</span>
<span class="t" style="left:1155.54px;top:1041.00px;font-size:27px;letter-spacing:0.470px;color:#313131;">Mail</span>
<span class="t" style="left:1650.67px;top:1040.00px;font-size:27px;letter-spacing:0.293px;color:#313131;">Text</span>
<span class="t" style="left:678.99px;top:1109.00px;font-size:27px;letter-spacing:-0.160px;color:#313131;">Employee Start Date</span>
<span class="t" style="left:1155.54px;top:1110.00px;font-size:27px;letter-spacing:-0.089px;color:#313131;">EmployeeStartDate</span>
<span class="t" style="left:1617.84px;top:1109.00px;font-size:27px;letter-spacing:-0.028px;color:#313131;">DateTime</span>
<span class="t" style="left:678.99px;top:1178.00px;font-size:27px;letter-spacing:-0.448px;color:#313131;">Employee End Date</span>
<span class="t" style="left:1155.54px;top:1179.00px;font-size:27px;letter-spacing:-0.429px;color:#313131;">EmployeeEndDate</span>
<span class="t" style="left:1617.84px;top:1178.00px;font-size:27px;letter-spacing:-0.028px;color:#313131;">DateTime</span>
<span class="t" style="left:2900.27px;top:133.00px;font-size:22px;letter-spacing:-0.113px;color:#fff;font-weight:700;">Save</span>
<span class="t" style="left:531.25px;top:1276.00px;font-size:22px;letter-spacing:0.043px;color:#222;font-weight:700;">Create Property</span>
</div>
</body></html>
